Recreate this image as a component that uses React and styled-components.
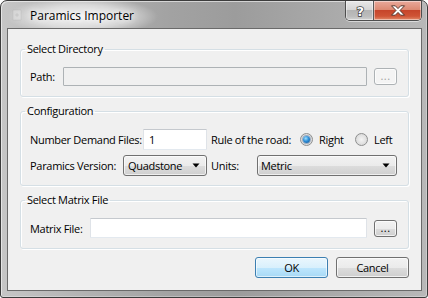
import React from 'react';
import styled, { createGlobalStyle } from 'styled-components';

const Global = createGlobalStyle`
  html, body { margin: 0; padding: 0; background: #ffffff; }
  body {
    font-family: "Segoe UI", "Open Sans", "Noto Sans", sans-serif;
    font-size: 11px;
    letter-spacing: -0.3px;
    color: #000;
  }
  * { box-sizing: border-box; }
`;

const Window = styled.div`
  width: 428px;
  height: 298px;
  border: 1px solid #3c3c3c;
  border-radius: 7px 7px 3px 3px;
  background: linear-gradient(90deg, #c6c6c6 0%, #b2b2b2 20%, #a2a2a2 40%, #9c9c9c 55%, #a8a8a8 75%, #b8b8b8 100%);
  box-shadow: inset 1px 1px 0 rgba(255,255,255,0.55), inset -1px -1px 0 rgba(255,255,255,0.3);
  display: flex;
  flex-direction: column;
  padding: 0 5px 6px 6px;
`;

const TitleBar = styled.div`
  height: 27px;
  display: flex;
  align-items: center;
`;

const Glow = styled.div`
  display: flex;
  align-items: center;
  height: 27px;
  padding-left: 2px;
  padding-right: 24px;
  background: radial-gradient(closest-side at 50% 55%, rgba(255,255,255,0.85) 0%, rgba(255,255,255,0.5) 60%, rgba(255,255,255,0) 100%);
  background-size: 100% 160%;
  background-position: center;
`;

const AppIcon = styled.svg`
  width: 16px;
  height: 16px;
  margin-right: 5px;
  flex: none;
`;

const Title = styled.span`
  font-size: 12px;
  letter-spacing: 0;
  color: #000;
  padding-top: 1px;
  text-shadow: 0 0 6px #fff, 0 0 10px rgba(255,255,255,0.9);
`;

const Caption = styled.div`
  margin-left: auto;
  align-self: flex-start;
  display: flex;
  height: 20px;
  border: 1px solid #4e4e4e;
  border-top: none;
  border-radius: 0 0 5px 5px;
  overflow: hidden;
  box-shadow: 0 1px 0 rgba(255,255,255,0.5);
`;

const CapButton = styled.div`
  width: ${p => p.$w}px;
  height: 100%;
  display: flex;
  align-items: center;
  justify-content: center;
  background: ${p => p.$close
    ? 'linear-gradient(180deg, #e9a99b 0%, #dd8a73 45%, #c6452b 50%, #cf5436 80%, #e28b6c 100%)'
    : 'linear-gradient(180deg, #e8e8e8 0%, #d6d6d6 45%, #b4b4b4 50%, #bcbcbc 80%, #d2d2d2 100%)'};
  box-shadow: inset 0 0 0 1px rgba(255,255,255,0.45);
  & + & { border-left: 1px solid #5a5a5a; }
`;

const Client = styled.div`
  flex: 1;
  border: 1px solid #6a6a6a;
  background: #f0f0f0;
  padding: 0 12px 12px 12px;
  display: flex;
  flex-direction: column;
`;

const Group = styled.fieldset`
  margin: ${p => p.$first ? 12 : 6}px 0 0 0;
  border: 1px solid #d5dfe5;
  border-radius: 3px;
  padding: 10px 11px ${p => p.$pb}px 9px;
  box-shadow: inset 1px 1px 0 #fff, 1px 1px 0 #fff;
  min-width: 0;
`;

const Legend = styled.legend`
  margin-left: -5px;
  padding: 0 2px;
  line-height: 16px;
  height: 16px;
  color: #000;
`;

const Row = styled.div`
  display: flex;
  align-items: center;
  height: ${p => p.$h}px;
`;

const Label = styled.span`
  white-space: nowrap;
  ${p => p.$w ? `flex: 0 0 ${p.$w}px;` : ''}
`;

const TextBox = styled.div`
  height: ${p => p.$h}px;
  ${p => p.$w ? `width: ${p.$w}px; flex: none;` : 'flex: 1;'}
  background: ${p => p.$disabled ? '#f0f0f0' : '#ffffff'};
  border: 1px solid;
  border-color: ${p => p.$disabled ? '#adb2b5' : '#c5c9ce #dfe3e8 #e3e9ef #dfe3e8'};
  border-radius: 1px;
  padding: 0 5px;
  display: flex;
  align-items: center;
`;

const SmallButton = styled.div`
  width: 23px;
  height: 17px;
  margin-left: 7px;
  flex: none;
  border: 1px solid ${p => p.$disabled ? '#adb2b5' : '#707070'};
  border-radius: 3px;
  background: ${p => p.$disabled ? '#f4f4f4' : 'linear-gradient(180deg, #f2f2f2 0%, #ebebeb 50%, #dddddd 51%, #cfcfcf 100%)'};
  box-shadow: inset 0 0 0 1px rgba(255,255,255,0.7);
  color: ${p => p.$disabled ? '#a0a0a0' : '#000'};
  font-size: 11px;
  letter-spacing: 0.5px;
  line-height: 1;
  display: flex;
  align-items: flex-end;
  justify-content: center;
  padding-bottom: 3px;
`;

const ConfigGrid = styled.div`
  display: grid;
  grid-template-columns: 177px 1fr;
  column-gap: 4px;
  row-gap: 5px;
`;

const Cell = styled.div`
  display: flex;
  align-items: center;
  justify-content: ${p => p.$between ? 'space-between' : 'flex-start'};
  height: 21px;
`;

const Combo = styled.div`
  width: ${p => p.$w}px;
  height: 21px;
  flex: none;
  margin-left: auto;
  border: 1px solid #707070;
  border-radius: 3px;
  background: linear-gradient(180deg, #f2f2f2 0%, #ebebeb 50%, #dddddd 51%, #cfcfcf 100%);
  box-shadow: inset 0 0 0 1px rgba(255,255,255,0.65);
  display: flex;
  align-items: center;
  padding: 0 6px 0 ${p => p.$pl}px;
`;

const ComboText = styled.span`
  flex: 1;
  white-space: nowrap;
`;

const Arrow = styled.svg`
  width: 8px;
  height: 5px;
  flex: none;
`;

const RadioOption = styled.label`
  display: flex;
  align-items: center;
  ${p => p.$w ? `flex: 0 0 ${p.$w}px;` : ''}
  white-space: nowrap;
`;

const RadioCircle = styled.span`
  width: 13px;
  height: 13px;
  border-radius: 50%;
  border: 1px solid #8e8f8f;
  background: radial-gradient(circle at 50% 50%, #f4f4f4 0%, #dcdcdc 70%, #c8c8c8 100%);
  display: flex;
  align-items: center;
  justify-content: center;
  margin-right: 6px;
  flex: none;
`;

const RadioDot = styled.span`
  width: 7px;
  height: 7px;
  border-radius: 50%;
  background: radial-gradient(circle at 40% 35%, #9fe0ff 0%, #2f8fd8 45%, #0c4c8c 100%);
  box-shadow: 0 0 0 1px rgba(20,70,130,0.35);
`;

const Footer = styled.div`
  margin-top: auto;
  display: flex;
  justify-content: flex-end;
  gap: 8px;
`;

const DialogButton = styled.div`
  width: 73px;
  height: 21px;
  border: 1px solid ${p => p.$default ? '#3c7fb1' : '#707070'};
  border-radius: 3px;
  background: ${p => p.$default
    ? 'linear-gradient(180deg, #eaf6fd 0%, #d9f0fc 50%, #bee6fd 51%, #a7d9f5 100%)'
    : 'linear-gradient(180deg, #f2f2f2 0%, #ebebeb 50%, #dddddd 51%, #cfcfcf 100%)'};
  box-shadow: inset 0 0 0 1px ${p => p.$default ? 'rgba(255,255,255,0.6)' : 'rgba(255,255,255,0.7)'};
  display: flex;
  align-items: center;
  justify-content: center;
`;

function Radio({ checked, children, w }) {
  return (
    <RadioOption $w={w}>
      <RadioCircle>{checked && <RadioDot />}</RadioCircle>
      {children}
    </RadioOption>
  );
}

function DownArrow() {
  return (
    <Arrow viewBox="0 0 8 5">
      <path d="M0.5 0.5 H7.5 L4 4.5 Z" fill="#000" />
    </Arrow>
  );
}

export default function App() {
  return (
    <>
      <Global />
      <Window>
        <TitleBar>
          <Glow>
            <AppIcon viewBox="0 0 16 16">
              <path d="M4 3 L12 3 L12 13 L4 13 Z" fill="rgba(255,255,255,0.25)" stroke="rgba(170,170,170,0.25)" />
              <path d="M6 8 L8 6 L10 8 L8 10 Z" fill="rgba(170,170,170,0.3)" />
            </AppIcon>
            <Title>Paramics Importer</Title>
          </Glow>
          <Caption>
            <CapButton $w={27}>
              <svg width="12" height="14" viewBox="0 0 12 14">
                <text x="6" y="12" textAnchor="middle" fontFamily="DejaVu Sans, sans-serif" fontWeight="bold" fontSize="13"
                  fill="#fff" stroke="#3a3a3a" strokeWidth="1.4" paintOrder="stroke">?</text>
              </svg>
            </CapButton>
            <CapButton $w={48} $close>
              <svg width="16" height="11" viewBox="0 0 16 11">
                <path d="M1.5 0.8 H5.3 L8 3.6 L10.7 0.8 H14.5 L10 5.5 L14.5 10.2 H10.7 L8 7.4 L5.3 10.2 H1.5 L6 5.5 Z"
                  fill="#fff" stroke="#4a2a22" strokeWidth="0.9" strokeLinejoin="round" />
              </svg>
            </CapButton>
          </Caption>
        </TitleBar>
        <Client>
          <Group $first $pb={10}>
            <Legend>Select Directory</Legend>
            <Row $h={19}>
              <Label $w={33}>Path:</Label>
              <TextBox $h={19} $disabled />
              <SmallButton $disabled>...</SmallButton>
            </Row>
          </Group>
          <Group $pb={9}>
            <Legend>Configuration</Legend>
            <ConfigGrid>
              <Cell $between>
                <Label>Number Demand Files:</Label>
                <TextBox $h={21} $w={64}>1</TextBox>
              </Cell>
              <Cell>
                <Label $w={89}>Rule of the road:</Label>
                <Radio checked w={55}>Right</Radio>
                <Radio>Left</Radio>
              </Cell>
              <Cell $between>
                <Label>Paramics Version:</Label>
                <Combo $w={84} $pl={4}>
                  <ComboText>Quadstone</ComboText>
                  <DownArrow />
                </Combo>
              </Cell>
              <Cell>
                <Label>Units:</Label>
                <Combo $w={140} $pl={3}>
                  <ComboText>Metric</ComboText>
                  <DownArrow />
                </Combo>
              </Cell>
            </ConfigGrid>
          </Group>
          <Group $pb={10}>
            <Legend>Select Matrix File</Legend>
            <Row $h={20}>
              <Label $w={60}>Matrix File:</Label>
              <TextBox $h={20} />
              <SmallButton>...</SmallButton>
            </Row>
          </Group>
          <Footer>
            <DialogButton $default>OK</DialogButton>
            <DialogButton>Cancel</DialogButton>
          </Footer>
        </Client>
      </Window>
    </>
  );
}
